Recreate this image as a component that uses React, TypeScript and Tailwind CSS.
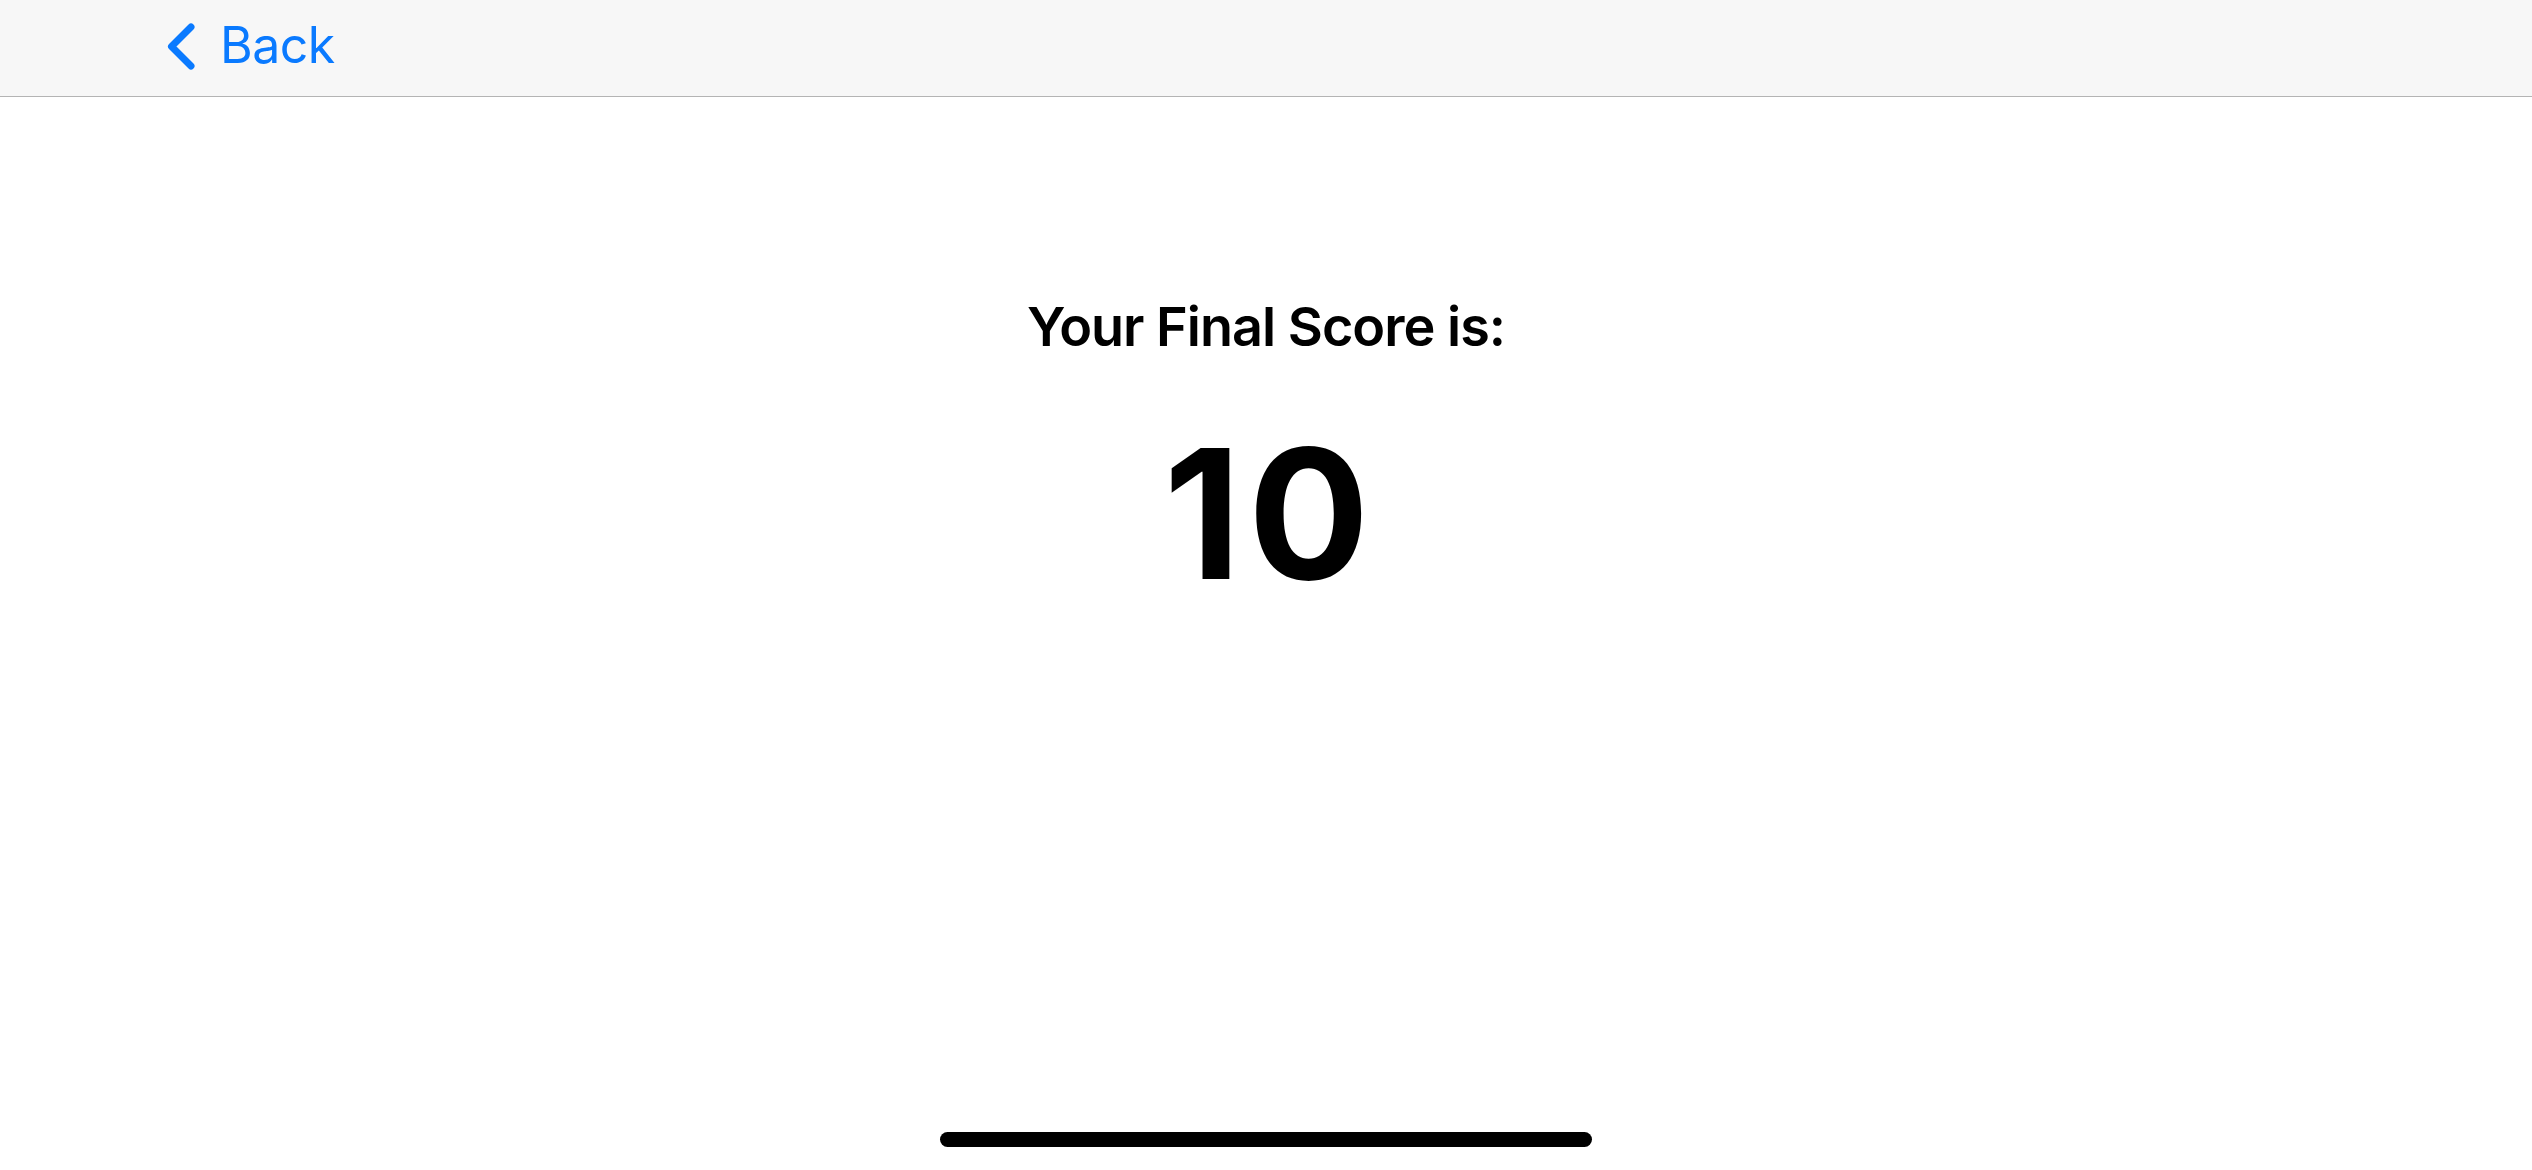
import React from "react";

export default function App() {
  return (
    <div
      className="flex min-h-screen w-full flex-col bg-white"
      style={{ fontFamily: "Inter, 'Noto Sans', sans-serif" }}
    >
      <header className="flex h-[97px] shrink-0 items-center border-b border-[#b4b4b4] bg-[#f7f7f7] pl-[166px]">
        <svg width="30" height="50" viewBox="0 0 30 50" className="mt-[-4px]">
          <path
            d="M25 6 L5.5 25.5 L25 45"
            fill="none"
            stroke="#0a7aff"
            strokeWidth="7"
            strokeLinecap="round"
            strokeLinejoin="round"
          />
        </svg>
        <span className="ml-[24px] mt-[-6px] text-[50px] leading-none font-normal tracking-[-0.5px] text-[#0a7aff]">
          Back
        </span>
      </header>
      <main className="flex flex-1 flex-col items-center">
        <h1 className="mt-[203px] text-[54px] leading-none font-semibold tracking-[-1px] text-black">
          Your Final Score is:
        </h1>
        <div className="ml-[8px] mt-[70px] text-[180px] leading-none font-bold tracking-[7px] text-black">
          10
        </div>
      </main>
      <div className="mb-[23px] flex justify-center">
        <div className="h-[15px] w-[652px] rounded-full bg-black" />
      </div>
    </div>
  );
}
